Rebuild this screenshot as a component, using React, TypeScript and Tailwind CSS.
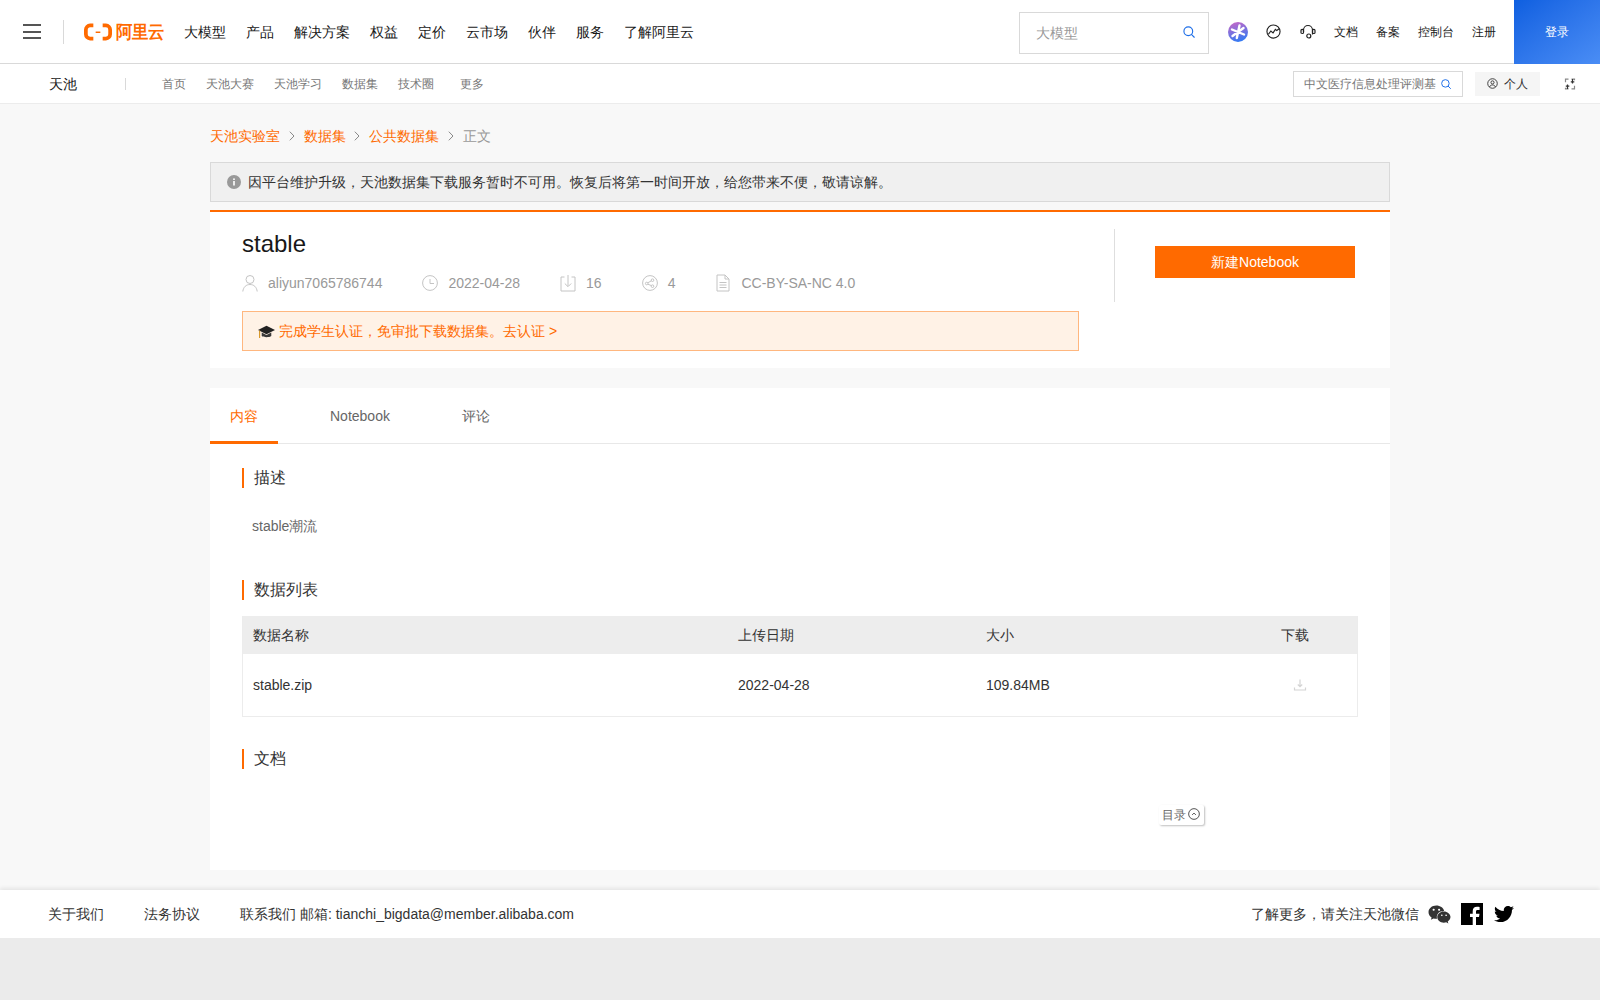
import React from "react";
import { FaWeixin, FaTwitter } from "react-icons/fa";

function Search({ cls }: { cls: string }) {
  return (
    <svg viewBox="0 0 16 16" className={cls} fill="none" stroke="#1f6fe8" strokeWidth="1.3">
      <circle cx="7.2" cy="7.2" r="5" />
      <path d="M11 11l3 3" strokeLinecap="round" />
    </svg>
  );
}

function Heading({ children }: { children: React.ReactNode }) {
  return (
    <div className="flex items-center h-5">
      <span className="w-0.5 h-5 bg-[#ff6a00]" />
      <span className="ml-2.5 text-base text-[#333]">{children}</span>
    </div>
  );
}

function Chevron() {
  return (
    <svg viewBox="0 0 8 10" className="mx-[7.8px] w-2 h-2.5" fill="none" stroke="#888">
      <path d="M1.800 .7L6 5 1.800 9.300" />
    </svg>
  );
}

const Gray = "#c4c4c4";

export default function App() {
  return (
    <div className="min-h-screen bg-[#ebebeb] flex flex-col text-[#333] font-['Liberation_Sans',sans-serif]">
      {/* top */}
      <header className="h-16 bg-white border-b border-[#d9d9d9] flex items-center">
        <div className="ml-[23px] w-[18px] h-[15px] flex flex-col justify-between">
          <span className="h-0.5 bg-[#555]" />
          <span className="h-0.5 bg-[#555]" />
          <span className="h-0.5 bg-[#555]" />
        </div>
        <span className="ml-[22px] w-px h-6 bg-[#d9d9d9]" />
        <div className="ml-5 flex items-center w-[80px]">
          <svg viewBox="0 0 30 18" className="w-[28px] h-[18px] shrink-0" fill="none" stroke="#ff6a00" strokeWidth="4">
            <path d="M10 2H6.500a4.500 4.500 0 0 0-4.500 4.500v5a4.500 4.500 0 0 0 4.500 4.500H10" />
            <path d="M20 2h3.500a4.500 4.500 0 0 1 4.500 4.500v5a4.500 4.500 0 0 1-4.500 4.500H20" />
            <path d="M12.500 9.300h5" strokeWidth="1.600" />
          </svg>
          <span className="ml-[4px] text-base leading-none font-bold text-[#ff6a00] whitespace-nowrap scale-y-110">阿里云</span>
        </div>
        <nav className="ml-5 flex gap-5 text-sm text-[#181818]">
          {["大模型", "产品", "解决方案", "权益", "定价", "云市场", "伙伴", "服务", "了解阿里云"].map((t) => (
            <span key={t}>{t}</span>
          ))}
        </nav>
        <div className="ml-auto mt-0.5 w-[190px] h-[42px] border border-[#d9d9d9] flex items-center pl-4 pr-3 justify-between text-sm text-[#999]">
          <span>大模型</span>
          <Search cls="w-[14px] h-[14px] -mt-0.5" />
        </div>
        <svg viewBox="0 0 20 20" className="ml-[19px] w-5 h-5">
          <defs>
            <linearGradient id="g" x1="0.3" y1="0" x2="0.6" y2="1">
              <stop offset="0" stopColor="#c268c8" />
              <stop offset="1" stopColor="#2f7bf5" />
            </linearGradient>
          </defs>
          <circle cx="10" cy="10" r="10" fill="url(#g)" />
          <path d="M11.500 3.500L8.800 16M4 7.500l12 5M15.500 6L4.500 14" stroke="#fff" strokeWidth="2.400" strokeLinecap="round" />
        </svg>
        <svg viewBox="0 0 16 16" className="ml-[18px] w-[15px] h-[15px]" fill="none" stroke="#222" strokeWidth="1.200">
          <circle cx="8" cy="8" r="7" />
          <path d="M2.500 11l2.700-3.500 2.300 2 2.500-3.800 1.500 1.300 2.500-2" />
        </svg>
        <svg viewBox="0 0 16 16" className="ml-[19px] w-4 h-4" fill="none" stroke="#222" strokeWidth="1.200">
          <path d="M3.500 8V6a4.500 4.500 0 0 1 9 0v4.500" />
          <rect x="1" y="5.300" width="2.500" height="4.200" rx="1.100" />
          <rect x="12.500" y="5.300" width="2.500" height="4.200" rx="1.100" />
          <circle cx="8.800" cy="12" r="2" />
        </svg>
        <div className="ml-[18px] flex items-center text-xs text-[#181818]">
          <span>文档</span>
          <span className="ml-[18px]">备案</span>
          <span className="ml-[18px]">控制台</span>
          <span className="ml-[18px]">注册</span>
        </div>
        <div className="ml-[18px] w-[86px] h-[64px] flex items-center justify-center text-xs text-white bg-gradient-to-br from-[#0d5fe0] to-[#4a8df5]">登录</div>
      </header>

      {/* sub */}
      <div className="h-10 bg-white border-b border-[#ececec] flex items-center">
        <span className="ml-[49px] text-sm text-[#181818]">天池</span>
        <span className="ml-[48px] w-px h-3 bg-[#d9d9d9]" />
        <nav className="ml-9 flex text-xs text-[#777]">
          <span>首页</span>
          <span className="ml-5">天池大赛</span>
          <span className="ml-5">天池学习</span>
          <span className="ml-5">数据集</span>
          <span className="ml-5">技术圈</span>
          <span className="ml-[26px]">更多</span>
        </nav>
        <div className="ml-auto w-[170px] h-[26px] border border-[#d9d9d9] flex items-center pl-2.5 pr-[10px] justify-between text-xs text-[#777] whitespace-nowrap">
          <span>中文医疗信息处理评测基</span>
          <Search cls="w-3 h-3 shrink-0" />
        </div>
        <div className="ml-3 w-[65px] h-6 bg-[#f5f5f5] flex items-center justify-center gap-1.5 text-xs text-[#333]">
          <svg viewBox="0 0 12 12" className="w-[11px] h-[11px]" fill="none" stroke="#333" strokeWidth="1">
            <circle cx="6" cy="6" r="5.200" />
            <circle cx="6" cy="4.800" r="1.700" />
            <path d="M2.800 9.800c.6-1.600 1.800-2.200 3.200-2.200s2.600.6 3.200 2.200" />
          </svg>
          个人
        </div>
        <svg viewBox="0 0 12 12" className="ml-6 mr-[24px] w-[12px] h-[12px]" fill="none" stroke="#333" strokeWidth="1.200">
          <path d="M4.500 1.200H1.500v3M7.500 1.200h3v1M4.500 10.800H1.500v-1M7.500 10.800h3v-3" stroke="#888" />
          <path d="M8.500 1v4.500M6.800 3.800h3.500M3.500 11V6.500M1.800 8.200h3.500" />
        </svg>
      </div>

      {/* main */}
      <main className="bg-[#f8f8f8] h-[766px]">
        <div className="w-[1180px] mx-auto">
          <div className="h-[58px] pt-1.5 flex items-center text-sm text-[#ff6a00]">
            <span>天池实验室</span>
            <Chevron />
            <span>数据集</span>
            <Chevron />
            <span>公共数据集</span>
            <Chevron />
            <span className="text-[#999]">正文</span>
          </div>
          <div className="h-10 bg-[#f0f0f0] border border-[#d9d9d9] flex items-center pl-4 text-sm text-[#333]">
            <svg viewBox="0 0 14 14" className="w-3.5 h-3.5 mr-[7px]">
              <circle cx="7" cy="7" r="7" fill="#999" />
              <rect x="6.200" y="6" width="1.600" height="4.500" fill="#fff" />
              <rect x="6.200" y="3.400" width="1.600" height="1.600" fill="#fff" />
            </svg>
            因平台维护升级，天池数据集下载服务暂时不可用。恢复后将第一时间开放，给您带来不便，敬请谅解。
          </div>

          <section className="mt-2 h-[158px] bg-white border-t-2 border-[#ff6a00] flex">
            <div className="w-[904px] pl-8 pr-[35px]">
              <h1 className="mt-4 text-2xl leading-8 text-[#181818]">stable</h1>
              <div className="mt-[14px] flex items-center h-[18px] text-sm text-[#999]">
                <svg viewBox="0 0 16 18" className="w-4 h-[18px]" fill="none" stroke={Gray}>
                  <circle cx="8" cy="5.500" r="4" />
                  <path d="M.8 17.500c.5-4.500 3.500-7 7.200-7s6.700 2.500 7.200 7" />
                </svg>
                <span className="ml-2.5">aliyun7065786744</span>
                <svg viewBox="0 0 16 16" className="ml-10 w-4 h-4" fill="none" stroke={Gray}>
                  <circle cx="8" cy="8" r="7.400" />
                  <path d="M8 4v4.500h4" />
                </svg>
                <span className="ml-2.5">2022-04-28</span>
                <svg viewBox="0 0 16 18" className="ml-10 w-4 h-[18px]" fill="none" stroke={Gray}>
                  <path d="M4.500 3H1v14h14V3h-3.500M8 1v11M4.800 9.500L8 12.700l3.200-3.200" />
                </svg>
                <span className="ml-2.5">16</span>
                <svg viewBox="0 0 16 16" className="ml-10 w-4 h-4" fill="none" stroke={Gray}>
                  <circle cx="8" cy="8" r="7.400" />
                  <circle cx="4.700" cy="8.500" r="1.300" />
                  <circle cx="10.500" cy="5.200" r="1.300" />
                  <circle cx="10.500" cy="11.200" r="1.300" />
                  <path d="M5.800 7.800l3.600-2M5.800 9.200l3.600 1.400" />
                </svg>
                <span className="ml-2.5">4</span>
                <svg viewBox="0 0 14 18" className="ml-[41px] w-3.5 h-[18px]" fill="none" stroke={Gray}>
                  <path d="M1 1h8l4 4v12H1zM9 1v4h4M3.500 8.500h7M3.500 11h7M3.500 13.500h7" />
                </svg>
                <span className="ml-[11px]">CC-BY-SA-NC 4.0</span>
              </div>
              <div className="mt-[19px] h-10 bg-[#fff2e6] border border-[#ffb77f] flex items-center pl-[15px] text-sm text-[#ff6a00]">
                <svg viewBox="0 0 16 16" className="w-[17px] h-[17px] mr-1">
                  <path d="M8 2.500L0 6.500 8 10.500l8-4z" fill="#222" />
                  <path d="M3.500 9v3.200c1.500 1.500 7.500 1.500 9 0V9L8 11.300z" fill="#3a3a3a" />
                  <path d="M1.500 7v7" stroke="#d99a2b" strokeWidth="1.100" />
                </svg>
                完成学生认证，免审批下载数据集。去认证 &gt;
              </div>
            </div>
            <div className="mt-[17px] h-[73px] w-px bg-[#dedede]" />
            <div className="ml-10 mt-[34px] w-[200px] h-8 bg-[#ff6a00] text-white text-sm flex items-center justify-center">新建Notebook</div>
          </section>

          <section className="mt-5 h-[482px] bg-white">
            <div className="h-14 border-b border-[#e8e8e8] flex text-sm text-[#666]">
              <div className="w-[68px] h-14 pt-[3px] border-b-[3px] border-[#ff6a00] text-[#ff6a00] flex items-center justify-center">内容</div>
              <div className="ml-[52px] flex items-center">Notebook</div>
              <div className="ml-[72px] flex items-center">评论</div>
            </div>
            <div className="px-8 pt-6 relative">
              <Heading>描述</Heading>
              <p className="mt-[28px] ml-2.5 text-sm leading-5 text-[#666]">stable潮流</p>
              <div className="mt-[44px]"><Heading>数据列表</Heading></div>
              <div className="mt-4 border border-[#ececec] border-t-0 text-sm text-[#333]">
                <div className="h-[38px] bg-[#ededed] grid grid-cols-[485px_248px_294.5px_1fr] items-center pl-2.5">
                  <span>数据名称</span>
                  <span>上传日期</span>
                  <span>大小</span>
                  <span>下载</span>
                </div>
                <div className="h-[62px] grid grid-cols-[485px_248px_294.5px_1fr] items-center pl-2.5">
                  <span>stable.zip</span>
                  <span>2022-04-28</span>
                  <span>109.84MB</span>
                  <svg viewBox="0 0 14 14" className="ml-[12.5px] w-3.5 h-3.5" fill="none" stroke="#d4d4d4" strokeWidth="1.200">
                    <path d="M7 1.500v7M4.800 6.500L7 8.700l2.200-2.200M1.500 9.500v2.500h11V9.500" />
                  </svg>
                </div>
              </div>
              <div className="mt-8"><Heading>文档</Heading></div>
              <div className="absolute left-[949px] top-[361px] h-5 w-[45px] bg-white rounded-[2px] shadow-[1px_1px_2px_rgba(0,0,0,0.25)] flex items-center pl-[3px] text-xs text-[#666]">
                目录
                <svg viewBox="0 0 13 13" className="ml-[2px] w-3 h-3 -mt-0.5" fill="none" stroke="#444">
                  <circle cx="6.500" cy="6.500" r="5.800" />
                  <path d="M4.500 7.500l2-2 2 2" />
                </svg>
              </div>
            </div>
          </section>
        </div>
      </main>

      <div className="h-5 bg-[#f8f8f8]" />
      <footer className="h-12 bg-white flex items-center text-sm text-[#333] shadow-[0_-2px_4px_rgba(0,0,0,0.08)]">
        <span className="ml-12">关于我们</span>
        <span className="ml-10">法务协议</span>
        <span className="ml-10">联系我们 邮箱: tianchi_bigdata@member.alibaba.com</span>
        <span className="ml-auto">了解更多，请关注天池微信</span>
        <FaWeixin className="ml-[9px] w-[23px] h-[23px] text-[#333]" />
        <svg viewBox="0 0 22 22" className="ml-[10px] w-[22px] h-[22px]">
          <rect width="22" height="22" fill="#000" />
          <path d="M15 22v-8h3l.5-3.300H15V8.600c0-1 .4-1.600 1.700-1.600h1.900V4c-.6-.1-1.600-.2-2.600-.2-2.600 0-4.300 1.500-4.300 4.400v2.500H9V14h2.700v8z" fill="#fff" />
        </svg>
        <FaTwitter className="ml-[11px] mr-[86px] w-5 h-5 text-black" />
      </footer>
      <div className="flex-1 bg-[#ebebeb]" />
    </div>
  );
}
